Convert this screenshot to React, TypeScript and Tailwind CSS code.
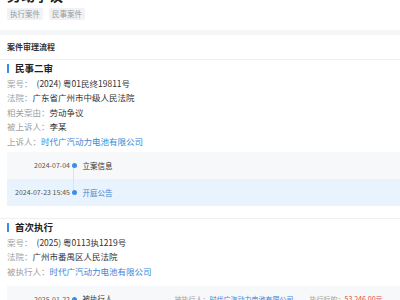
import type { ReactNode } from "react";

const Row = ({ label, children }: { label: string; children: ReactNode }) => (
  <div className="h-[14.5px] flex items-center text-[8.5px] whitespace-nowrap">
    <span className="text-[#a0a0a0]">{label}：</span>
    {children}
  </div>
);

const SectionTitle = ({ title }: { title: string }) => (
  <div className="h-[16px] flex items-center gap-[6px]">
    <span className="w-[2px] h-[9px] bg-[#3b8ee8]" />
    <span className="text-[9.5px] font-bold text-[#222]">{title}</span>
  </div>
);

const TimelineItem = ({
  date,
  children,
  active,
}: {
  date: string;
  children: ReactNode;
  active?: boolean;
}) => (
  <div
    className={`h-[27px] flex items-center text-[7.5px] whitespace-nowrap ${
      active ? "bg-[#e9f3fd]" : "bg-[#f7f8fa]"
    }`}
  >
    <span className="w-[63px] shrink-0 text-right text-[7px] text-[#555]">{date}</span>
    <span className="w-[5px] h-[5px] shrink-0 rounded-full bg-[#3b8ee8] ml-[1.5px] relative" />
    {children}
  </div>
);

const App = () => {
  return (
    <div
      className="w-[400px] h-[300px] overflow-hidden bg-white"
      style={{ fontFamily: '"Noto Sans CJK SC", "Noto Sans", sans-serif' }}
    >
      {/* Header: title (cut off) and tags */}
      <div className="pl-[7px] -mt-[14px]">
        <div className="h-[18px] text-[14px] leading-[18px] font-bold text-[#222]">劳动争议</div>
        <div className="flex gap-[6px] mt-[4px]">
          <span className="h-[12px] px-[3px] flex items-center bg-[#f0f2f5] text-[#9a9a9a] text-[7.5px] rounded-[2px]">执行案件</span>
          <span className="h-[12px] px-[3px] flex items-center bg-[#f0f2f5] text-[#9a9a9a] text-[7.5px] rounded-[2px]">民事案件</span>
        </div>
      </div>

      <div className="h-[5px] mt-[10px] bg-[#f5f6f7]" />

      <div className="h-[25px] flex items-center pl-[7px] border-b border-[#f0f0f0]">
        <span className="text-[8px] font-bold text-[#333]">案件审理流程</span>
      </div>

      {/* 民事二审 */}
      <div className="pl-[7px]">
        <SectionTitle title="民事二审" />
        <Row label="案号">
          <span className="text-[#333] ml-[4px]">(2024) 粤01民终19811号</span>
        </Row>
        <Row label="法院">
          <span className="text-[#333]">广东省广州市中级人民法院</span>
        </Row>
        <Row label="相关案由">
          <span className="text-[#333]">劳动争议</span>
        </Row>
        <Row label="被上诉人">
          <span className="text-[#333]">李某</span>
        </Row>
        <Row label="上诉人">
          <span className="text-[#3a86d6]">时代广汽动力电池有限公司</span>
        </Row>

        <div className="mt-[3.5px] relative">
          <div className="absolute left-[66px] top-[13px] w-px h-[28px] bg-[#d6e4f2]" />
          <TimelineItem date="2024-07-04">
            <span className="ml-[6px] text-[#333]">立案信息</span>
          </TimelineItem>
          <TimelineItem date="2024-07-23 15:45" active>
            <span className="ml-[6px] text-[#3a86d6]">开庭公告</span>
          </TimelineItem>
        </div>
      </div>

      <div className="mt-[12px] border-t border-[#f0f0f0]" />

      {/* 首次执行 */}
      <div className="pl-[7px]">
        <SectionTitle title="首次执行" />
        <Row label="案号">
          <span className="text-[#333] ml-[4px]">(2025) 粤0113执1219号</span>
        </Row>
        <Row label="法院">
          <span className="text-[#333]">广州市番禺区人民法院</span>
        </Row>
        <Row label="被执行人">
          <span className="text-[#3a86d6]">时代广汽动力电池有限公司</span>
        </Row>

        <div className="mt-[7px]">
          <TimelineItem date="2025-01-22">
            <span className="ml-[6px] text-[#333] w-[92px] shrink-0">被执行人</span>
            <span className="text-[7px] text-[#a0a0a0]">被执行人：</span>
            <span className="text-[7px] text-[#3a86d6]">时代广汽动力电池有限公司</span>
            <span className="text-[7px] text-[#a0a0a0] ml-[16px]">执行标的：</span>
            <span className="text-[7px] text-[#e4493c]">53,246.00元</span>
          </TimelineItem>
        </div>
      </div>
    </div>
  );
};

export default App;
